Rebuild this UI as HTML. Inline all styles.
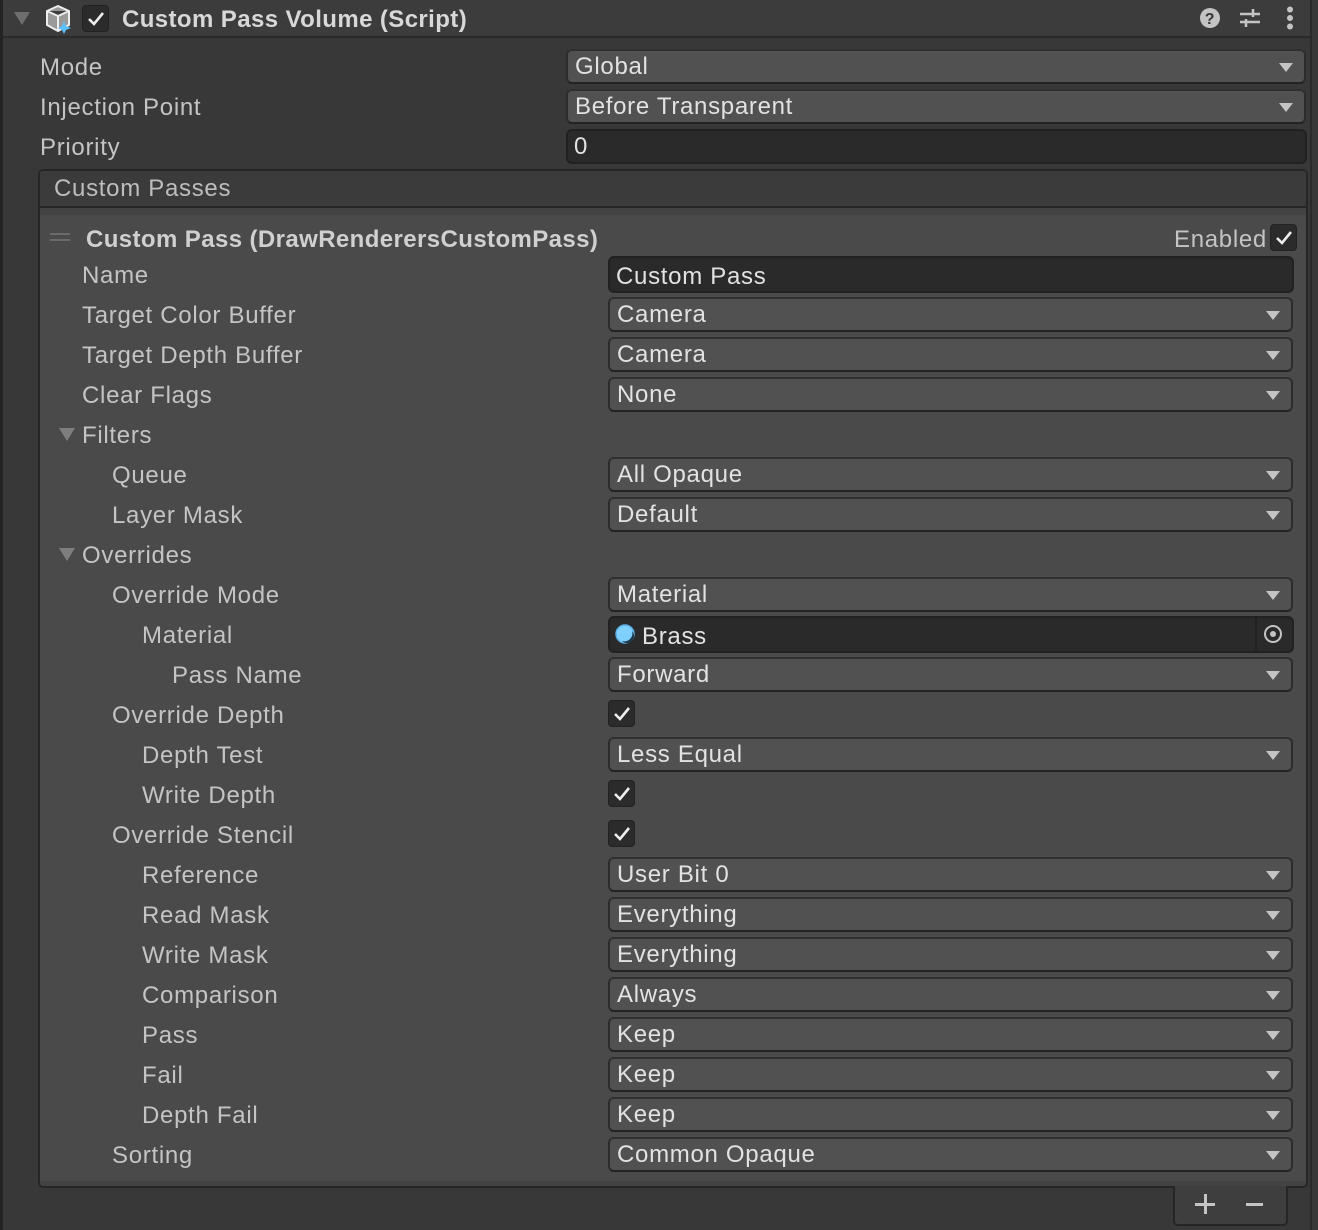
<!DOCTYPE html>
<html><head><meta charset="utf-8"><style>
*{margin:0;padding:0;box-sizing:border-box}
body{width:1318px;height:1230px;background:#383838;position:relative;overflow:hidden;font-family:"Liberation Sans",sans-serif;font-size:24px;color:#c8c8c8;letter-spacing:0.7px}
.a{position:absolute}
.l{position:absolute;line-height:30px;color:#c4c4c4;white-space:nowrap}
.dd{position:absolute;left:608px;width:685px;height:35px;background:#515151;border:2px solid #2c2c2c;border-top-color:#303030;border-bottom-color:#232323;border-radius:6px;color:#e2e2e2;padding-left:7px;line-height:31px}
.dd:after{content:"";position:absolute;right:11px;top:12px;border-left:7px solid transparent;border-right:7px solid transparent;border-top:9px solid #c4c4c4}
.tf{position:absolute;background:#2a2a2a;border:2px solid #212121;border-radius:6px;color:#e2e2e2;padding-left:6px;line-height:31px}
.cb{position:absolute;width:27px;height:27px;background:#2b2b2b;border:1px solid #222;border-radius:4px}
.cb svg{position:absolute;left:3px;top:3px}
.tri{position:absolute;border-left:8px solid transparent;border-right:8px solid transparent;border-top:13px solid #7e7e7e}
.b{font-weight:bold;letter-spacing:0.4px}
</style></head><body>
<div class="a" style="left:0;top:0;width:3px;height:1230px;background:#232323"></div>
<div class="a" style="left:1310px;top:0;width:2px;height:1230px;background:#2a2a2a"></div>
<div class="a" style="left:3px;top:0;width:1307px;height:38px;background:#3c3c3c;border-bottom:2px solid #2a2a2a"></div>
<div class="tri" style="left:14px;top:12px;border-top-color:#6e6e6e"></div>
<svg class="a" style="left:44px;top:4px" width="30" height="30" viewBox="0 0 30 30"><path d="M14 2 L25 7 L25 21 L14 27 L3 21 L3 7 Z M3 7 L14 12 L25 7 M14 12 L14 27" fill="#9a9a9a" stroke="#eee" stroke-width="2" stroke-linejoin="round"/><path d="M20 17 L22 22 L27 24 L22 26 L20 30 L18 26 L14 24 L18 22 Z" fill="#5cc0ff"/></svg>
<div class="cb" style="left:82px;top:5px"><svg width="20" height="20" viewBox="0 0 20 20"><path d="M3 10 L8 15 L17 4" fill="none" stroke="#eee" stroke-width="2.6"/></svg></div>
<div class="l b" style="left:122px;top:5px;color:#d8d8d8">Custom Pass Volume (Script)</div>
<svg class="a" style="left:1199px;top:7px" width="22" height="22" viewBox="0 0 22 22"><circle cx="11" cy="11" r="10" fill="#c4c4c4"/><text x="11" y="17" text-anchor="middle" font-family="Liberation Sans" font-weight="bold" font-size="16" fill="#383838">?</text></svg>
<svg class="a" style="left:1238px;top:6px" width="24" height="24" viewBox="0 0 24 24"><path d="M2 8H22M2 16H22M15 3V11M8 13V21" stroke="#c4c4c4" stroke-width="2.5" fill="none"/></svg>
<svg class="a" style="left:1282px;top:6px" width="16" height="24" viewBox="0 0 16 24"><circle cx="8" cy="3.5" r="3" fill="#c4c4c4"/><circle cx="8" cy="12" r="3" fill="#c4c4c4"/><circle cx="8" cy="20.5" r="3" fill="#c4c4c4"/></svg>

<div class="l" style="left:40px;top:53px">Mode</div>
<div class="dd" style="left:566px;width:740px;top:49px">Global</div>
<div class="l" style="left:40px;top:93px">Injection Point</div>
<div class="dd" style="left:566px;width:740px;top:89px">Before Transparent</div>
<div class="l" style="left:40px;top:133px">Priority</div>
<div class="tf" style="left:566px;width:741px;top:129px;height:35px">0</div>

<div class="a" style="left:38px;top:169px;width:1270px;height:1019px;border:2px solid #262626;border-radius:5px;background:#434343;overflow:hidden">
 <div class="a" style="left:0;top:0;width:1268px;height:37px;background:#3b3b3b;border-bottom:2px solid #262626"></div>
 <div class="a" style="left:0;top:44px;width:1268px;height:966px;background:#4a4a4a"></div>
</div>
<div class="l" style="left:54px;top:174px;color:#bdbdbd">Custom Passes</div>
<div class="a" style="left:50px;top:233px;width:20px;height:2px;background:#6a6a6a"></div>
<div class="a" style="left:50px;top:239px;width:20px;height:2px;background:#6a6a6a"></div>
<div class="l b" style="left:86px;top:225px;color:#d0d0d0">Custom Pass (DrawRenderersCustomPass)</div>
<div class="l" style="left:1174px;top:225px">Enabled</div>
<div class="cb" style="left:1270px;top:224px"><svg width="20" height="20" viewBox="0 0 20 20"><path d="M3 10 L8 15 L17 4" fill="none" stroke="#eee" stroke-width="2.6"/></svg></div>

<div class="l" style="left:82px;top:261px">Name</div>
<div class="tf" style="left:608px;width:686px;top:256px;height:37px;padding-top:3px">Custom Pass</div>

<div class="l" style="left:82px;top:301px">Target Color Buffer</div><div class="dd" style="top:297px">Camera</div>
<div class="l" style="left:82px;top:341px">Target Depth Buffer</div><div class="dd" style="top:337px">Camera</div>
<div class="l" style="left:82px;top:381px">Clear Flags</div><div class="dd" style="top:377px">None</div>
<div class="tri" style="left:59px;top:428px"></div><div class="l" style="left:82px;top:421px">Filters</div>
<div class="l" style="left:112px;top:461px">Queue</div><div class="dd" style="top:457px">All Opaque</div>
<div class="l" style="left:112px;top:501px">Layer Mask</div><div class="dd" style="top:497px">Default</div>
<div class="tri" style="left:59px;top:548px"></div><div class="l" style="left:82px;top:541px">Overrides</div>
<div class="l" style="left:112px;top:581px">Override Mode</div><div class="dd" style="top:577px">Material</div>
<div class="l" style="left:142px;top:621px">Material</div>
<div class="tf" style="left:608px;width:686px;top:616px;height:37px;padding-left:32px;padding-top:3px">Brass</div>
<svg class="a" style="left:614px;top:623px" width="22" height="22" viewBox="0 0 22 22"><circle cx="11" cy="11" r="9" fill="#7fd0ff" stroke="#5ab0e8" stroke-width="1.5"/><path d="M8 18 A8 8 0 0 0 18 8 A7 7 0 0 1 8 18Z" fill="#1e3a4a"/></svg>
<div class="a" style="left:1255px;top:618px;width:2px;height:33px;background:#222"></div>
<svg class="a" style="left:1263px;top:624px" width="20" height="20" viewBox="0 0 20 20"><circle cx="10" cy="10" r="8" fill="none" stroke="#c4c4c4" stroke-width="2"/><circle cx="10" cy="10" r="3" fill="#c4c4c4"/></svg>
<div class="l" style="left:172px;top:661px">Pass Name</div><div class="dd" style="top:657px">Forward</div>
<div class="l" style="left:112px;top:701px">Override Depth</div>
<div class="cb" style="left:608px;top:700px"><svg width="20" height="20" viewBox="0 0 20 20"><path d="M3 10 L8 15 L17 4" fill="none" stroke="#eee" stroke-width="2.6"/></svg></div>
<div class="l" style="left:142px;top:741px">Depth Test</div><div class="dd" style="top:737px">Less Equal</div>
<div class="l" style="left:142px;top:781px">Write Depth</div>
<div class="cb" style="left:608px;top:780px"><svg width="20" height="20" viewBox="0 0 20 20"><path d="M3 10 L8 15 L17 4" fill="none" stroke="#eee" stroke-width="2.6"/></svg></div>
<div class="l" style="left:112px;top:821px">Override Stencil</div>
<div class="cb" style="left:608px;top:820px"><svg width="20" height="20" viewBox="0 0 20 20"><path d="M3 10 L8 15 L17 4" fill="none" stroke="#eee" stroke-width="2.6"/></svg></div>
<div class="l" style="left:142px;top:861px">Reference</div><div class="dd" style="top:857px">User Bit 0</div>
<div class="l" style="left:142px;top:901px">Read Mask</div><div class="dd" style="top:897px">Everything</div>
<div class="l" style="left:142px;top:941px">Write Mask</div><div class="dd" style="top:937px">Everything</div>
<div class="l" style="left:142px;top:981px">Comparison</div><div class="dd" style="top:977px">Always</div>
<div class="l" style="left:142px;top:1021px">Pass</div><div class="dd" style="top:1017px">Keep</div>
<div class="l" style="left:142px;top:1061px">Fail</div><div class="dd" style="top:1057px">Keep</div>
<div class="l" style="left:142px;top:1101px">Depth Fail</div><div class="dd" style="top:1097px">Keep</div>
<div class="l" style="left:112px;top:1141px">Sorting</div><div class="dd" style="top:1137px">Common Opaque</div>

<div class="a" style="left:1173px;top:1186px;width:115px;height:40px;background:#3e3e3e;border:2px solid #262626;border-top:none;border-radius:0 0 5px 5px"></div>
<div class="a" style="left:1195px;top:1203px;width:20px;height:3px;background:#c4c4c4"></div>
<div class="a" style="left:1203.5px;top:1194px;width:3px;height:20px;background:#c4c4c4"></div>
<div class="a" style="left:1246px;top:1203px;width:17px;height:3px;background:#c4c4c4"></div>
</body></html>
